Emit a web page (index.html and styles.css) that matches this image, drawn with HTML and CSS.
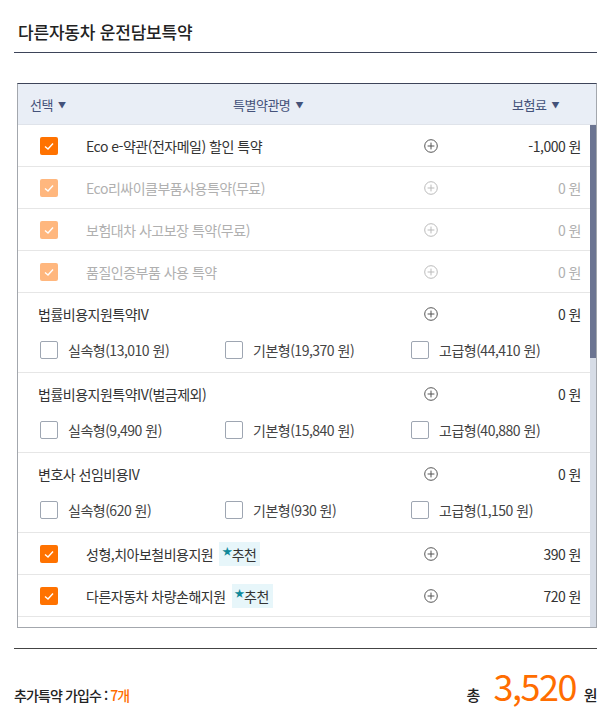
FILE: index.html
```html
<!DOCTYPE html>
<html lang="ko">
<head>
    <meta charset="UTF-8">
    <meta name="viewport" content="width=device-width, initial-scale=1.0">
    <title>다른자동차 운전담보특약</title>
    <link rel="stylesheet" href="styles.css">
</head>
<body>
    <div class="wrap">
        <h2 class="title">다른자동차 운전담보특약</h2>

        <div class="table">
            <div class="thead">
                <span class="th th-check">선택 <i class="sort">▼</i></span>
                <span class="th th-name">특별약관명 <i class="sort">▼</i></span>
                <span class="th th-price">보험료 <i class="sort">▼</i></span>
            </div>
            <div class="tbody">
                <div class="list">
                    <div class="row">
                        <span class="chk on"><svg viewBox="0 0 18 18"><polyline points="5,9.5 8,12 13,6.5"/></svg></span>
                        <span class="name">Eco e-약관(전자메일) 할인 특약</span>
                        <span class="plus"><svg viewBox="0 0 14 14"><circle cx="7" cy="7" r="6.3"/><path d="M7 3.6v6.8M3.6 7h6.8"/></svg></span>
                        <span class="price">-1,000 원</span>
                    </div>
                    <div class="row off">
                        <span class="chk on"><svg viewBox="0 0 18 18"><polyline points="5,9.5 8,12 13,6.5"/></svg></span>
                        <span class="name">Eco리싸이클부품사용특약(무료)</span>
                        <span class="plus"><svg viewBox="0 0 14 14"><circle cx="7" cy="7" r="6.3"/><path d="M7 3.6v6.8M3.6 7h6.8"/></svg></span>
                        <span class="price">0 원</span>
                    </div>
                    <div class="row off">
                        <span class="chk on"><svg viewBox="0 0 18 18"><polyline points="5,9.5 8,12 13,6.5"/></svg></span>
                        <span class="name">보험대차 사고보장 특약(무료)</span>
                        <span class="plus"><svg viewBox="0 0 14 14"><circle cx="7" cy="7" r="6.3"/><path d="M7 3.6v6.8M3.6 7h6.8"/></svg></span>
                        <span class="price">0 원</span>
                    </div>
                    <div class="row off">
                        <span class="chk on"><svg viewBox="0 0 18 18"><polyline points="5,9.5 8,12 13,6.5"/></svg></span>
                        <span class="name">품질인증부품 사용 특약</span>
                        <span class="plus"><svg viewBox="0 0 14 14"><circle cx="7" cy="7" r="6.3"/><path d="M7 3.6v6.8M3.6 7h6.8"/></svg></span>
                        <span class="price">0 원</span>
                    </div>

                    <div class="group">
                        <div class="group-head">
                            <span class="name">법률비용지원특약IV</span>
                            <span class="plus"><svg viewBox="0 0 14 14"><circle cx="7" cy="7" r="6.3"/><path d="M7 3.6v6.8M3.6 7h6.8"/></svg></span>
                            <span class="price">0 원</span>
                        </div>
                        <div class="opts">
                            <label class="opt"><span class="chk"></span>실속형(13,010 원)</label>
                            <label class="opt"><span class="chk"></span>기본형(19,370 원)</label>
                            <label class="opt"><span class="chk"></span>고급형(44,410 원)</label>
                        </div>
                    </div>
                    <div class="group">
                        <div class="group-head">
                            <span class="name">법률비용지원특약IV(벌금제외)</span>
                            <span class="plus"><svg viewBox="0 0 14 14"><circle cx="7" cy="7" r="6.3"/><path d="M7 3.6v6.8M3.6 7h6.8"/></svg></span>
                            <span class="price">0 원</span>
                        </div>
                        <div class="opts">
                            <label class="opt"><span class="chk"></span>실속형(9,490 원)</label>
                            <label class="opt"><span class="chk"></span>기본형(15,840 원)</label>
                            <label class="opt"><span class="chk"></span>고급형(40,880 원)</label>
                        </div>
                    </div>
                    <div class="group">
                        <div class="group-head">
                            <span class="name">변호사 선임비용IV</span>
                            <span class="plus"><svg viewBox="0 0 14 14"><circle cx="7" cy="7" r="6.3"/><path d="M7 3.6v6.8M3.6 7h6.8"/></svg></span>
                            <span class="price">0 원</span>
                        </div>
                        <div class="opts">
                            <label class="opt"><span class="chk"></span>실속형(620 원)</label>
                            <label class="opt"><span class="chk"></span>기본형(930 원)</label>
                            <label class="opt"><span class="chk"></span>고급형(1,150 원)</label>
                        </div>
                    </div>

                    <div class="row">
                        <span class="chk on"><svg viewBox="0 0 18 18"><polyline points="5,9.5 8,12 13,6.5"/></svg></span>
                        <span class="name">성형,치아보철비용지원 <span class="badge"><i class="star">★</i>추천</span></span>
                        <span class="plus"><svg viewBox="0 0 14 14"><circle cx="7" cy="7" r="6.3"/><path d="M7 3.6v6.8M3.6 7h6.8"/></svg></span>
                        <span class="price">390 원</span>
                    </div>
                    <div class="row">
                        <span class="chk on"><svg viewBox="0 0 18 18"><polyline points="5,9.5 8,12 13,6.5"/></svg></span>
                        <span class="name">다른자동차 차량손해지원 <span class="badge"><i class="star">★</i>추천</span></span>
                        <span class="plus"><svg viewBox="0 0 14 14"><circle cx="7" cy="7" r="6.3"/><path d="M7 3.6v6.8M3.6 7h6.8"/></svg></span>
                        <span class="price">720 원</span>
                    </div>
                    <div class="row"></div>
                </div>
                <div class="scroll"><div class="thumb"></div></div>
            </div>
        </div>

        <div class="foot">
            <div class="count">추가특약 가입수 : <b>7개</b></div>
            <div class="total">총 <strong>3,520</strong> 원</div>
        </div>
    </div>
</body>
</html>
```

FILE: styles.css
```css
body {
    margin: 0;
    font-family: "Noto Sans CJK KR", "Noto Sans", sans-serif;
    color: #333;
    background: #fff;
    letter-spacing: -0.5px;
}
.wrap {
    width: 583px;
    margin-left: 14px;
}
.title {
    margin: 0;
    padding: 20px 0 8px 4px;
    font-size: 17px;
    font-weight: 500;
    line-height: 24px;
    color: #222;
    border-bottom: 1px solid #3d4459;
    letter-spacing: -0.2px;
}
.table {
    margin: 30px 0 0 3px;
    border: 1px solid #a3a7ad;
    border-top: 1px solid #3d4459;
}
.thead {
    display: flex;
    align-items: center;
    height: 40px;
    background-color: #e9eef6;
    border-bottom: 1px solid #dfe3ea;
    font-size: 13px;
    color: #44527a;
}
.th-check {
    width: 120px;
    padding-left: 12px;
}
.th-name {
    flex: 1;
    text-align: center;
    padding-right: 126px;
}
.th-price {
    width: 84px;
}
.sort {
    font-style: normal;
    font-size: 8px;
    margin-left: 2px;
    vertical-align: 2px;
}
.tbody {
    display: flex;
    height: 502px;
    overflow: hidden;
}
.list {
    flex: 1;
}
.scroll {
    width: 6px;
    background-color: #d6dce6;
}
.thumb {
    height: 233px;
    background-color: #6b7491;
}
.row, .group-head {
    display: flex;
    align-items: center;
    height: 41px;
    border-bottom: 1px solid #e6e6e6;
    font-size: 14px;
}
.group-head {
    height: 40px;
    border: none;
    padding-top: 1px;
}
.row {
    padding-left: 22px;
}
.group {
    height: 79px;
    border-bottom: 1px solid #e6e6e6;
}
.group-head {
    padding-left: 20px;
}
.row .chk {
    margin-right: 28px;
}
.name {
    flex: 1;
    display: flex;
    align-items: center;
}
.plus {
    width: 14px;
    height: 14px;
    margin-right: 43px;
}
.plus svg {
    display: block;
    width: 14px;
    height: 14px;
    fill: none;
    stroke: #555;
    stroke-width: 1;
}
.price {
    width: 100px;
    padding-right: 9px;
    text-align: right;
}
.off {
    color: #b0b0b0;
}
.off .plus svg {
    stroke: #bbb;
}
.off .chk {
    opacity: 0.5;
}
.chk {
    display: inline-block;
    box-sizing: border-box;
    width: 18px;
    height: 18px;
    border: 1px solid #9ea6b2;
    border-radius: 2px;
    background: #fff;
    flex-shrink: 0;
}
.chk.on {
    border: none;
    background-color: #ff7200;
}
.chk svg {
    display: block;
    width: 18px;
    height: 18px;
    fill: none;
    stroke: #fff;
    stroke-width: 1.4;
}
.opts {
    display: grid;
    grid-template-columns: 185px 186px 1fr;
    padding: 6px 0 0 22px;
}
.opt {
    display: flex;
    align-items: center;
    gap: 10px;
    font-size: 14px;
    color: #444;
}
.badge {
    display: inline-flex;
    align-items: center;
    margin-left: 6px;
    padding: 0 4px 0 3px;
    height: 24px;
    background-color: #e7f6fa;
    color: #333;
}
.star {
    font-style: normal;
    font-size: 10px;
    color: #10899a;
    align-self: flex-start;
    margin-top: 1px;
}
.foot {
    display: flex;
    justify-content: space-between;
    align-items: baseline;
    margin-top: 20px;
    border-top: 1px solid #444;
    padding-top: 10px;
}
.count {
    font-size: 14px;
    font-weight: 500;
    color: #222;
    letter-spacing: -0.9px;
}
.count b {
    color: #ff6d00;
    font-weight: 500;
}
.total {
    font-size: 15px;
    font-weight: 500;
    color: #222;
}
.total strong {
    font-size: 36px;
    font-weight: 400;
    color: #ff6d00;
    margin: 0 4px 0 10px;
    letter-spacing: -1.5px;
}
```
